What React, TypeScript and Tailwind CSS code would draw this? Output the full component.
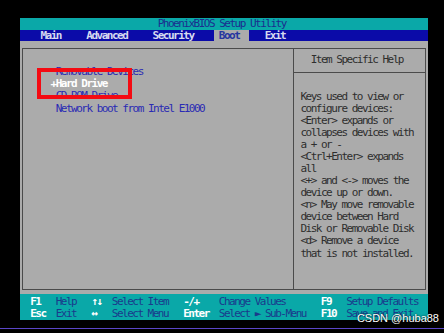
export default function App() {
  return (
    <div className="relative h-[333px] w-[444px] overflow-hidden bg-black">
      <div className="pt-[18px] pl-[20px]">
        <div className="w-[408px] font-['DejaVu_Sans_Mono','Liberation_Mono',monospace] text-[11px] tracking-[-1.5px]">
          {/* title bar */}
          <div className="h-[12px] bg-[#0aa8a8] pl-[137.7px] leading-[12px] text-[#1b2d8f]">
            PhoenixBIOS Setup Utility
          </div>

          {/* menu bar */}
          <div className="flex h-[11px] bg-[#0b0ba8] pl-[20.4px] font-bold leading-[11px] text-[#d6daf0]">
            <span className="w-[45.9px]">Main</span>
            <span className="w-[66.3px]">Advanced</span>
            <span className="w-[61.2px]">Security</span>
            <span className="w-[35.7px] bg-[#ababab] pl-[5.1px] text-[#2636a0]">Boot</span>
            <span className="ml-[15.3px]">Exit</span>
          </div>

          {/* body */}
          <div className="h-[253px] bg-[#ababab] pt-[7px] pr-[2px] pb-[4px] pl-[2px]">
            <div className="flex h-full border border-[#4b4b4b]">
              <div className="w-[270px] pt-[17.3px] pl-[32.7px] leading-[12.08px] text-[#2a2ab4]">
                <div>Removable Devices</div>
                <div className="-ml-[5.1px] font-bold text-white">+Hard Drive</div>
                <div>CD-ROM Drive</div>
                <div>Network boot from Intel E1000</div>
              </div>
              <div className="flex-1 border-l border-[#4b4b4b]">
                <div className="h-[24px] border-b border-[#4b4b4b] pl-[16.7px] leading-[21px] text-[#2e2e2e]">
                  Item Specific Help
                </div>
                <div className="whitespace-pre pt-[17.5px] pl-[6.5px] leading-[12.08px] text-[#2e2e2e]">
                  {`Keys used to view or
configure devices:
<Enter> expands or
collapses devices with
a + or -
<Ctrl+Enter> expands
all
<+> and <-> moves the
device up or down.
<n> May move removable
device between Hard
Disk or Removable Disk
<d> Remove a device
that is not installed.`}
                </div>
              </div>
            </div>
          </div>

          {/* key help bar */}
          <div className="grid h-[26px] grid-cols-[25.5px_35.7px_20.4px_71.4px_35.7px_102px_25.5px_auto] bg-[#0aa8a8] pt-[2px] pl-[10.2px] leading-[12px] text-[#1a3a8c]">
            <span className="font-bold text-white">F1</span>
            <span>Help</span>
            <span className="font-bold text-white">↑↓</span>
            <span>Select Item</span>
            <span className="font-bold text-white">-/+</span>
            <span>Change Values</span>
            <span className="font-bold text-white">F9</span>
            <span>Setup Defaults</span>
            <span className="font-bold text-white">Esc</span>
            <span>Exit</span>
            <span className="font-bold text-white">↔</span>
            <span>Select Menu</span>
            <span className="font-bold text-white">Enter</span>
            <span>Select ► Sub-Menu</span>
            <span className="font-bold text-white">F10</span>
            <span>Save and Exit</span>
          </div>
        </div>
      </div>

      <div className="absolute left-0 top-[328px] h-px w-full bg-[#5a46c8]" />

      {/* red highlight box */}
      <div className="absolute left-[37px] top-[68px] h-[31px] w-[95px] border-[4px] border-[#f40a12]" />

      {/* watermark */}
      <div className="absolute right-[5px] top-[311px] font-['Liberation_Sans',sans-serif] text-[11px] leading-[14px] text-white [text-shadow:0_0_2px_#000]">
        CSDN @huba88
      </div>
    </div>
  );
}
